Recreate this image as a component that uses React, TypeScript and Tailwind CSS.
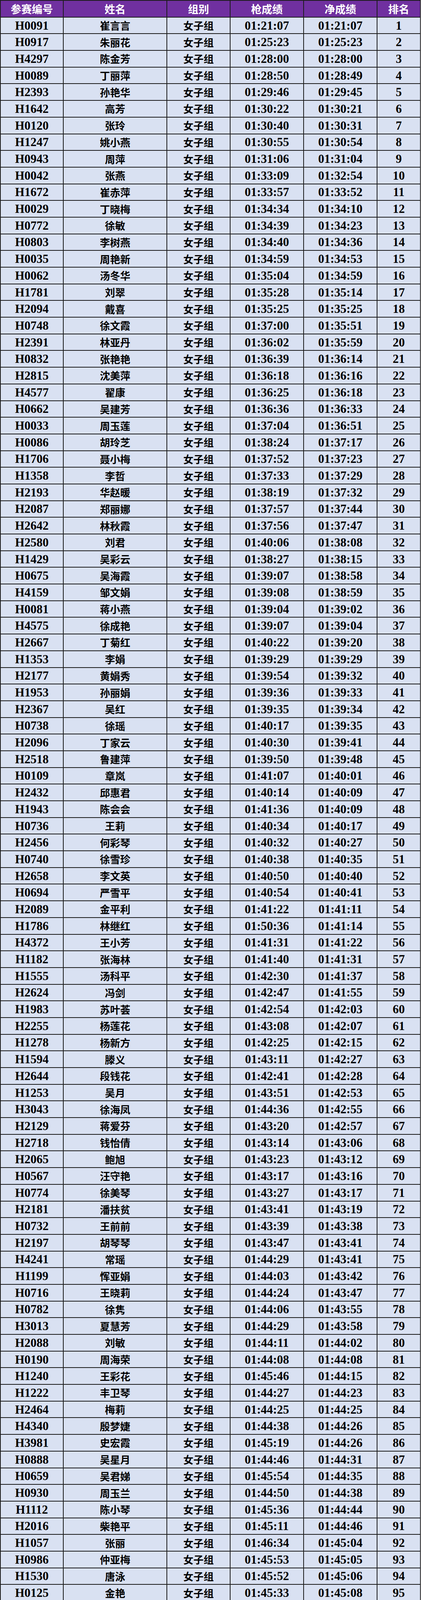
import React from 'react';

const rows: [string, string, string, string][] = [
  ['H0091', '崔言言', '01:21:07', '01:21:07'],
  ['H0917', '朱丽花', '01:25:23', '01:25:23'],
  ['H4297', '陈金芳', '01:28:00', '01:28:00'],
  ['H0089', '丁丽萍', '01:28:50', '01:28:49'],
  ['H2393', '孙艳华', '01:29:46', '01:29:45'],
  ['H1642', '高芳', '01:30:22', '01:30:21'],
  ['H0120', '张玲', '01:30:40', '01:30:31'],
  ['H1247', '姚小燕', '01:30:55', '01:30:54'],
  ['H0943', '周萍', '01:31:06', '01:31:04'],
  ['H0042', '张燕', '01:33:09', '01:32:54'],
  ['H1672', '崔赤萍', '01:33:57', '01:33:52'],
  ['H0029', '丁晓梅', '01:34:34', '01:34:10'],
  ['H0772', '徐敏', '01:34:39', '01:34:23'],
  ['H0803', '李树燕', '01:34:40', '01:34:36'],
  ['H0035', '周艳新', '01:34:59', '01:34:53'],
  ['H0062', '汤冬华', '01:35:04', '01:34:59'],
  ['H1781', '刘翠', '01:35:28', '01:35:14'],
  ['H2094', '戴喜', '01:35:25', '01:35:25'],
  ['H0748', '徐文霞', '01:37:00', '01:35:51'],
  ['H2391', '林亚丹', '01:36:02', '01:35:59'],
  ['H0832', '张艳艳', '01:36:39', '01:36:14'],
  ['H2815', '沈美萍', '01:36:18', '01:36:16'],
  ['H4577', '翟康', '01:36:25', '01:36:18'],
  ['H0662', '吴建芳', '01:36:36', '01:36:33'],
  ['H0033', '周玉莲', '01:37:04', '01:36:51'],
  ['H0086', '胡玲芝', '01:38:24', '01:37:17'],
  ['H1706', '聂小梅', '01:37:52', '01:37:23'],
  ['H1358', '李哲', '01:37:33', '01:37:29'],
  ['H2193', '华赵暖', '01:38:19', '01:37:32'],
  ['H2087', '郑丽娜', '01:37:57', '01:37:44'],
  ['H2642', '林秋霞', '01:37:56', '01:37:47'],
  ['H2580', '刘君', '01:40:06', '01:38:08'],
  ['H1429', '吴彩云', '01:38:27', '01:38:15'],
  ['H0675', '吴海霞', '01:39:07', '01:38:58'],
  ['H4159', '邹文娟', '01:39:08', '01:38:59'],
  ['H0081', '蒋小燕', '01:39:04', '01:39:02'],
  ['H4575', '徐成艳', '01:39:07', '01:39:04'],
  ['H2667', '丁菊红', '01:40:22', '01:39:20'],
  ['H1353', '李娟', '01:39:29', '01:39:29'],
  ['H2177', '黄娟秀', '01:39:54', '01:39:32'],
  ['H1953', '孙丽娟', '01:39:36', '01:39:33'],
  ['H2367', '吴红', '01:39:35', '01:39:34'],
  ['H0738', '徐瑶', '01:40:17', '01:39:35'],
  ['H2096', '丁家云', '01:40:30', '01:39:41'],
  ['H2518', '鲁建萍', '01:39:50', '01:39:48'],
  ['H0109', '章岚', '01:41:07', '01:40:01'],
  ['H2432', '邱惠君', '01:40:14', '01:40:09'],
  ['H1943', '陈会会', '01:41:36', '01:40:09'],
  ['H0736', '王莉', '01:40:34', '01:40:17'],
  ['H2456', '何彩琴', '01:40:32', '01:40:27'],
  ['H0740', '徐雪珍', '01:40:38', '01:40:35'],
  ['H2658', '李文英', '01:40:50', '01:40:40'],
  ['H0694', '严雪平', '01:40:54', '01:40:41'],
  ['H2089', '金平利', '01:41:22', '01:41:11'],
  ['H1786', '林继红', '01:50:36', '01:41:14'],
  ['H4372', '王小芳', '01:41:31', '01:41:22'],
  ['H1182', '张海林', '01:41:40', '01:41:31'],
  ['H1555', '汤科平', '01:42:30', '01:41:37'],
  ['H2624', '冯剑', '01:42:47', '01:41:55'],
  ['H1983', '苏叶荟', '01:42:54', '01:42:03'],
  ['H2255', '杨莲花', '01:43:08', '01:42:07'],
  ['H1278', '杨新方', '01:42:25', '01:42:15'],
  ['H1594', '滕义', '01:43:11', '01:42:27'],
  ['H2644', '段钱花', '01:42:41', '01:42:28'],
  ['H1253', '吴月', '01:43:51', '01:42:53'],
  ['H3043', '徐海凤', '01:44:36', '01:42:55'],
  ['H2129', '蒋爱芬', '01:43:20', '01:42:57'],
  ['H2718', '钱怡倩', '01:43:14', '01:43:06'],
  ['H2065', '鲍旭', '01:43:23', '01:43:12'],
  ['H0567', '汪守艳', '01:43:17', '01:43:16'],
  ['H0774', '徐美琴', '01:43:27', '01:43:17'],
  ['H2181', '潘扶贫', '01:43:41', '01:43:19'],
  ['H0732', '王前前', '01:43:39', '01:43:38'],
  ['H2197', '胡琴琴', '01:43:47', '01:43:41'],
  ['H4241', '常瑶', '01:44:29', '01:43:41'],
  ['H1199', '恽亚娟', '01:44:03', '01:43:42'],
  ['H0716', '王晓莉', '01:44:24', '01:43:47'],
  ['H0782', '徐隽', '01:44:06', '01:43:55'],
  ['H3013', '夏慧芳', '01:44:29', '01:43:58'],
  ['H2088', '刘敏', '01:44:11', '01:44:02'],
  ['H0190', '周海荣', '01:44:08', '01:44:08'],
  ['H1240', '王彩花', '01:45:46', '01:44:15'],
  ['H1222', '丰卫琴', '01:44:27', '01:44:23'],
  ['H2464', '梅莉', '01:44:25', '01:44:25'],
  ['H4340', '殷梦婕', '01:44:38', '01:44:26'],
  ['H3981', '史宏霞', '01:45:19', '01:44:26'],
  ['H0888', '吴星月', '01:44:46', '01:44:31'],
  ['H0659', '吴君娣', '01:45:54', '01:44:35'],
  ['H0930', '周玉兰', '01:44:50', '01:44:38'],
  ['H1112', '陈小琴', '01:45:36', '01:44:44'],
  ['H2016', '柴艳平', '01:45:11', '01:44:46'],
  ['H1057', '张丽', '01:46:34', '01:45:04'],
  ['H0986', '仲亚梅', '01:45:53', '01:45:05'],
  ['H1530', '唐泳', '01:45:52', '01:45:06'],
  ['H0125', '金艳', '01:45:33', '01:45:08'],
  ['H3256', '钱海艳', '01:45:16', '01:45:09'],
  ['H0350', '伍飞', '01:46:21', '01:45:25'],
  ['H0043', '张健媛', '01:46:11', '01:45:28'],
  ['H2118', '戴亚', '01:45:34', '01:45:34'],
  ['H1232', '殷淑萍', '01:45:58', '01:45:41'],
];

const headers = ['参赛编号', '姓名', '组别', '枪成绩', '净成绩', '排名'];

// every row shares the same column template so the borders line up
const rowGrid = 'grid grid-cols-[159px_263px_160px_186px_186px_109px] gap-[2px] h-[40.7px] shrink-0';
const cell = 'flex items-center justify-center overflow-hidden bg-[#d9e1f2] text-black leading-none';
const num = `${cell} text-[31px] font-bold font-['Liberation_Serif','Times_New_Roman',serif]`;
const cjk = `${cell} text-[26px] font-bold font-['Noto_Sans_CJK_SC',sans-serif]`;

export default function App() {
  return (
    <div className="w-[1080px] bg-white">
      <div className="w-[1077px] bg-[#1c1c1c] p-[2px] flex flex-col gap-[2px]">
        <div className={rowGrid}>
          {headers.map(h => (
            <div
              key={h}
              className="flex items-center justify-center bg-[#7030a0] text-white text-[27px] font-bold leading-none font-['Noto_Sans_CJK_SC',sans-serif]"
            >
              {h}
            </div>
          ))}
        </div>
        {rows.map(([id, name, gun, net], i) => (
          <div key={id} className={rowGrid}>
            <div className={num}>{id}</div>
            <div className={cjk}>{name}</div>
            <div className={cjk}>女子组</div>
            <div className={num}>{gun}</div>
            <div className={num}>{net}</div>
            <div className={num}>{i + 1}</div>
          </div>
        ))}
      </div>
    </div>
  );
}
